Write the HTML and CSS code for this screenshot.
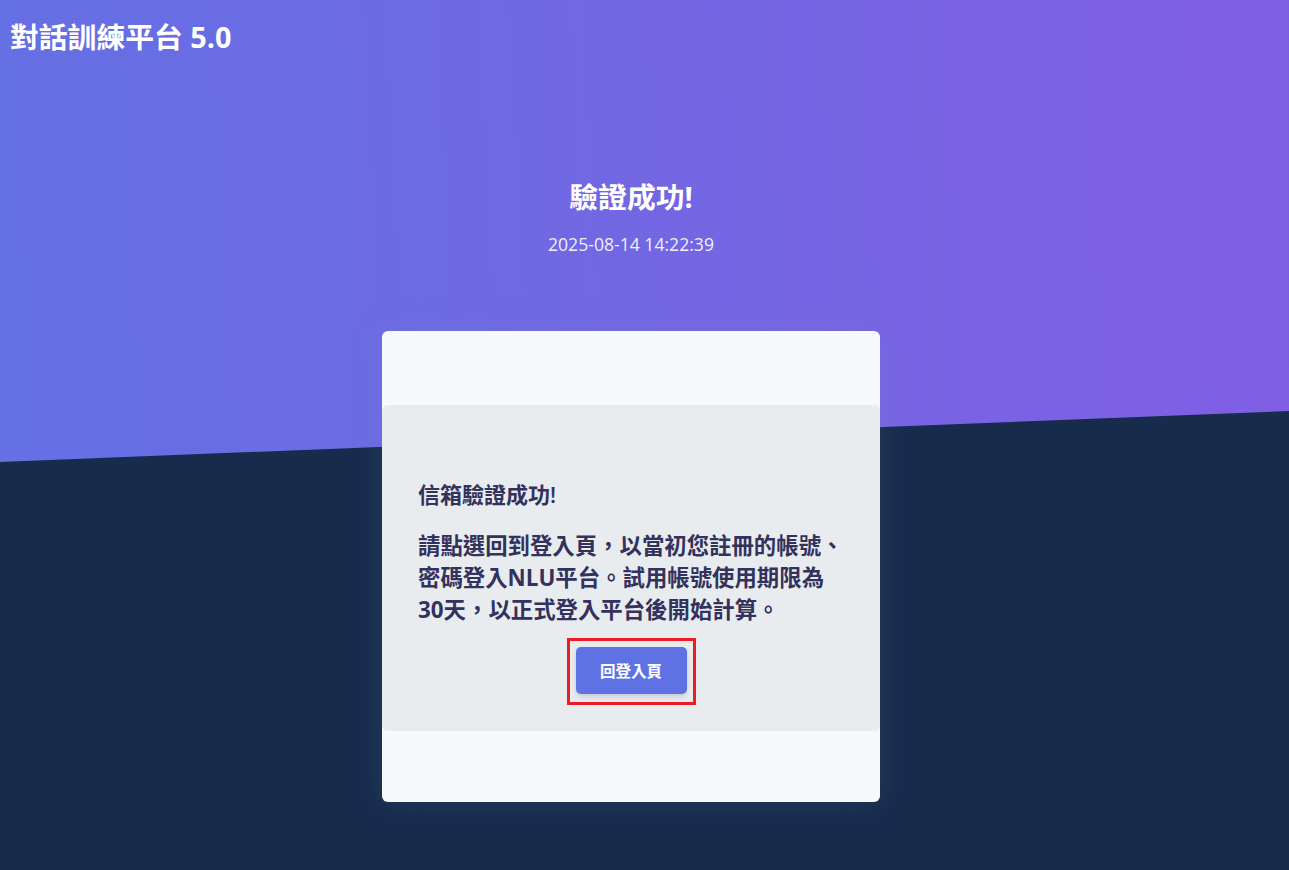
FILE: index.html
```html
<!DOCTYPE html>
<html lang="zh-Hant">
<head>
<meta charset="utf-8">
<title>對話訓練平台 5.0</title>
<link rel="stylesheet" href="styles.css">
</head>
<body>
<header class="hero">
  <div class="brand">對話訓練平台 5.0</div>
  <div class="intro">
    <h1 class="intro-title">驗證成功!</h1>
    <p class="intro-date">2025-08-14 14:22:39</p>
  </div>
  <svg class="separator" viewBox="0 0 2560 100" preserveAspectRatio="none" aria-hidden="true">
    <polygon points="2560 0 2560 100 0 100" fill="#172b4d"></polygon>
  </svg>
</header>
<main class="main">
  <section class="card">
    <div class="card-body">
      <h2 class="card-heading">信箱驗證成功!</h2>
      <p class="card-text">請點選回到登入頁，以當初您註冊的帳號、密碼登入NLU平台。試用帳號使用期限為30天，以正式登入平台後開始計算。</p>
      <div class="action">
        <div class="highlight">
          <button class="btn" type="button">回登入頁</button>
        </div>
      </div>
    </div>
  </section>
</main>
</body>
</html>
```

FILE: styles.css
```css
html, body {
  margin: 0;
  padding: 0;
}
body {
  background: #172b4d;
  font-family: "Open Sans", "Noto Sans CJK TC", sans-serif;
  color: #32325d;
  min-height: 870px;
}
.hero {
  position: relative;
  height: 462px;
  background: linear-gradient(87deg, #6470e3 0%, #805ee4 100%);
  box-sizing: border-box;
  padding-top: 20px;
}
.brand {
  padding-left: 10px;
  font-size: 28.8px;
  line-height: 34px;
  font-weight: 700;
  color: #fff;
}
.intro {
  width: 1262px;
  text-align: center;
  padding-top: 126px;
}
.intro-title {
  margin: 0;
  font-size: 28.8px;
  line-height: 34px;
  font-weight: 700;
  color: #fff;
}
.intro-date {
  margin: 18px 0 0;
  font-size: 17.6px;
  line-height: 24px;
  font-weight: 400;
  color: rgba(255, 255, 255, 0.92);
}
.separator {
  position: absolute;
  left: 0;
  bottom: 0;
  width: 100%;
  height: 51px;
  display: block;
}
.main {
  width: 1262px;
  display: flex;
  justify-content: center;
  margin-top: -131px;
  position: relative;
}
.card {
  width: 498px;
  background: #f7fafc;
  border-radius: 6px;
  padding: 74px 0 71px;
  box-shadow: 0 0 32px 0 rgba(136, 152, 170, 0.15);
}
.card-body {
  background: #e9ecef;
  border-radius: 6px;
  padding: 73px 36px 26px;
}
.card-heading {
  margin: 0;
  font-size: 22px;
  line-height: 32px;
  font-weight: 600;
  color: #32325d;
}
.card-text {
  margin: 20px 0 0;
  font-size: 22.4px;
  line-height: 32px;
  font-weight: 700;
  color: #32325d;
}
.action {
  display: flex;
  justify-content: center;
  margin-top: 12px;
}
.highlight {
  border: 3px solid #ed1c24;
  padding: 6px 6px 8px;
  display: flex;
}
.btn {
  width: 111px;
  height: 47px;
  border: 0;
  border-radius: 5px;
  background: #5e72e4;
  color: #fff;
  font-family: "Open Sans", "Noto Sans CJK TC", sans-serif;
  font-size: 15.5px;
  font-weight: 700;
  box-shadow: 0 4px 6px rgba(50, 50, 93, 0.11), 0 1px 3px rgba(0, 0, 0, 0.08);
  cursor: pointer;
  padding: 0;
}
```
